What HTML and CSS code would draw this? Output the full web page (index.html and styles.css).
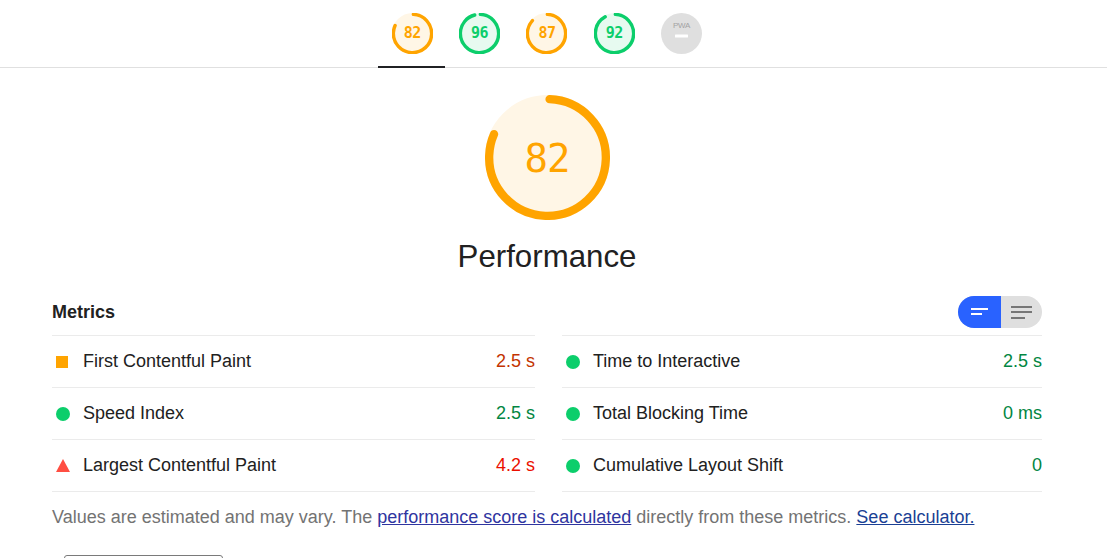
FILE: index.html
```html
<!DOCTYPE html>
<html lang="en">
<head>
<meta charset="utf-8">
<title>Lighthouse Report</title>
<link rel="stylesheet" href="styles.css">
</head>
<body>
<header class="sticky-header">
  <nav class="tabs">
    <a class="tab tab--active" href="#performance">
      <span class="mini-gauge">
        <svg viewBox="0 0 120 120" class="gauge-svg">
          <circle class="base base--avg" r="56" cx="60" cy="60"/>
          <circle class="arc arc--avg arc--sm" r="56" cx="60" cy="60" stroke-dasharray="283.5 351.86" transform="rotate(-87.44 60 60)"/>
        </svg>
        <span class="mini-num num--avg">82</span>
      </span>
    </a>
    <a class="tab" href="#accessibility">
      <span class="mini-gauge">
        <svg viewBox="0 0 120 120" class="gauge-svg">
          <circle class="base base--pass" r="56" cx="60" cy="60"/>
          <circle class="arc arc--pass arc--sm" r="56" cx="60" cy="60" stroke-dasharray="332.8 351.86" transform="rotate(-87.44 60 60)"/>
        </svg>
        <span class="mini-num num--pass">96</span>
      </span>
    </a>
    <a class="tab" href="#best-practices">
      <span class="mini-gauge">
        <svg viewBox="0 0 120 120" class="gauge-svg">
          <circle class="base base--avg" r="56" cx="60" cy="60"/>
          <circle class="arc arc--avg arc--sm" r="56" cx="60" cy="60" stroke-dasharray="301.1 351.86" transform="rotate(-87.44 60 60)"/>
        </svg>
        <span class="mini-num num--avg">87</span>
      </span>
    </a>
    <a class="tab" href="#seo">
      <span class="mini-gauge">
        <svg viewBox="0 0 120 120" class="gauge-svg">
          <circle class="base base--pass" r="56" cx="60" cy="60"/>
          <circle class="arc arc--pass arc--sm" r="56" cx="60" cy="60" stroke-dasharray="318.7 351.86" transform="rotate(-87.44 60 60)"/>
        </svg>
        <span class="mini-num num--pass">92</span>
      </span>
    </a>
    <a class="tab" href="#pwa">
      <span class="mini-gauge">
        <svg viewBox="0 0 41 41" class="gauge-svg">
          <circle r="20.5" cx="20.5" cy="20.5" fill="#dfdfdf"/>
          <text x="20.5" y="14.5" text-anchor="middle" class="pwa-text">PWA</text>
          <rect x="14" y="21.5" width="13" height="3" rx="0.5" fill="#ffffff"/>
        </svg>
      </span>
    </a>
  </nav>
</header>

<main class="main">
  <section class="score-header">
    <div class="big-gauge">
      <svg viewBox="0 0 120 120" class="gauge-svg">
        <circle class="base base--avg" r="56" cx="60" cy="60"/>
        <circle class="arc arc--avg" r="56" cx="60" cy="60" stroke-dasharray="284.5 351.86" transform="rotate(-87.95 60 60)"/>
      </svg>
      <span class="big-num num--avg">82</span>
    </div>
    <div class="category-title">Performance</div>
  </section>

  <section class="metrics">
    <div class="metrics-head">
      <span class="metrics-title">Metrics</span>
      <div class="toggle">
        <span class="toggle-half toggle-half--on">
          <svg width="18" height="8" viewBox="0 0 18 8"><rect x="0" y="0" width="17" height="2" fill="#fff"/><rect x="0" y="5" width="11" height="2" fill="#fff"/></svg>
        </span>
        <span class="toggle-half">
          <svg width="22" height="13" viewBox="0 0 22 13"><rect x="0" y="0" width="21" height="2" fill="#767676"/><rect x="0" y="5" width="21" height="2" fill="#767676"/><rect x="0" y="11" width="14" height="2" fill="#767676"/></svg>
        </span>
      </div>
    </div>

    <div class="metric-grid">
      <div class="metric-col metric-col--left">
        <div class="metric">
          <span class="icon"><span class="sq"></span></span>
          <span class="metric-title">First Contentful Paint</span>
          <span class="metric-value val--avg">2.5&nbsp;s</span>
        </div>
        <div class="metric">
          <span class="icon"><span class="dot"></span></span>
          <span class="metric-title">Speed Index</span>
          <span class="metric-value val--pass">2.5&nbsp;s</span>
        </div>
        <div class="metric">
          <span class="icon"><span class="tri"></span></span>
          <span class="metric-title">Largest Contentful Paint</span>
          <span class="metric-value val--fail">4.2&nbsp;s</span>
        </div>
      </div>
      <div class="metric-col metric-col--right">
        <div class="metric">
          <span class="icon"><span class="dot"></span></span>
          <span class="metric-title">Time to Interactive</span>
          <span class="metric-value val--pass">2.5&nbsp;s</span>
        </div>
        <div class="metric">
          <span class="icon"><span class="dot"></span></span>
          <span class="metric-title">Total Blocking Time</span>
          <span class="metric-value val--pass">0&nbsp;ms</span>
        </div>
        <div class="metric">
          <span class="icon"><span class="dot"></span></span>
          <span class="metric-title">Cumulative Layout Shift</span>
          <span class="metric-value val--pass">0</span>
        </div>
      </div>
    </div>

    <p class="disclaimer">Values are estimated and may vary. The <a class="link link--visited" href="#score">performance score is calculated</a> directly from these metrics. <a class="link" href="#calc">See calculator.</a></p>

    <button class="treemap-btn" type="button" aria-label="View Treemap"></button>
  </section>
</main>
</body>
</html>
```

FILE: styles.css
```css
* { box-sizing: border-box; }

html, body {
  margin: 0;
  padding: 0;
  background: #ffffff;
}

body {
  font-family: "Liberation Sans", Arial, sans-serif;
  font-size: 18px;
  color: #212121;
  overflow: hidden;
}

/* Sticky header with mini gauges */
.sticky-header {
  height: 68px;
  border-bottom: 1px solid #e0e0e0;
  display: flex;
  justify-content: center;
  padding-right: 13px;
}

.tabs {
  display: flex;
  height: 67px;
}

.tab {
  position: relative;
  width: 67.4px;
  height: 67px;
  display: flex;
  align-items: center;
  justify-content: center;
  text-decoration: none;
}

.tab--active::after {
  content: "";
  position: absolute;
  left: -1px;
  right: 1px;
  bottom: -1px;
  height: 2px;
  background: #202124;
}

.mini-gauge {
  position: relative;
  width: 41px;
  height: 41px;
  display: block;
  margin-top: -1px;
}

.gauge-svg {
  display: block;
  width: 100%;
  height: 100%;
}

.base { stroke-width: 8; }
.base--avg { fill: #fff6e6; stroke: #fff6e6; }
.base--pass { fill: #e7faf0; stroke: #e7faf0; }

.arc {
  fill: none;
  stroke-width: 8;
  stroke-linecap: round;
}
.arc--sm { stroke-width: 10; }
.arc--avg { stroke: #ffa400; }
.arc--pass { stroke: #0cce6b; }

.mini-num {
  position: absolute;
  inset: 0;
  display: flex;
  align-items: center;
  justify-content: center;
  font-family: "DejaVu Sans Mono", monospace;
  font-weight: bold;
  font-size: 15px;
  letter-spacing: -0.5px;
}

.num--avg { color: #ffa400; }
.num--pass { color: #0cce6b; }

.pwa-text {
  font-family: "Liberation Sans", Arial, sans-serif;
  font-size: 8px;
  fill: #a3a3a3;
  letter-spacing: -0.3px;
}

/* Main */
.main {
  width: 1042px;
  padding-left: 52px;
}

.score-header {
  display: flex;
  flex-direction: column;
  align-items: center;
  padding-top: 27px;
}

.big-gauge {
  position: relative;
  width: 125px;
  height: 125px;
}

.big-num {
  position: absolute;
  inset: 0;
  display: flex;
  align-items: center;
  justify-content: center;
  font-family: "DejaVu Sans Mono", monospace;
  font-size: 39px;
  letter-spacing: -1px;
  padding-top: 2px;
}

.category-title {
  margin-top: 19px;
  font-size: 31.25px;
  line-height: 36px;
  color: #212121;
}

/* Metrics */
.metrics {
  margin-top: 21px;
}

.metrics-head {
  display: flex;
  align-items: center;
  justify-content: space-between;
  height: 32px;
  margin-bottom: 7px;
}

.metrics-title {
  font-weight: bold;
  font-size: 18px;
  color: #212121;
}

.toggle {
  display: flex;
  width: 84px;
  height: 32px;
  border-radius: 16px;
  overflow: hidden;
  background: #dfdfdf;
}

.toggle-half {
  flex: 1;
  display: flex;
  align-items: center;
  justify-content: center;
}

.toggle-half--on {
  background: #2962ff;
  padding-left: 2px;
}

.toggle-half:not(.toggle-half--on) {
  padding-left: 1px;
}

.metric-grid {
  display: grid;
  grid-template-columns: 483px 480px;
  column-gap: 27px;
}

.metric-col {
  border-bottom: 1px solid #ebebeb;
}

.metric {
  display: flex;
  align-items: center;
  height: 52px;
  border-top: 1px solid #ebebeb;
  padding-left: 4px;
}

.icon {
  width: 14px;
  height: 14px;
  display: flex;
  align-items: center;
  justify-content: center;
  margin-right: 13px;
}

.sq {
  width: 12px;
  height: 12px;
  background: #ffa400;
  margin-left: -2px;
}

.dot {
  width: 14px;
  height: 14px;
  border-radius: 50%;
  background: #0cce6b;
}

.tri {
  width: 0;
  height: 0;
  border-left: 7px solid transparent;
  border-right: 7px solid transparent;
  border-bottom: 13px solid #ff4e42;
}

.metric-title {
  flex: 1;
  color: #212121;
}

.metric-value {
  text-align: right;
}

.val--avg { color: #c33300; }
.val--pass { color: #018642; }
.val--fail { color: #eb0f00; }

.disclaimer {
  margin: 13px 0 0;
  line-height: 24px;
  color: #737373;
}

.link {
  color: #1a3f94;
  text-decoration: underline;
}

.link--visited {
  color: #2f35a0;
}

.treemap-btn {
  display: block;
  margin: 26px 0 0 12px;
  width: 159px;
  height: 40px;
  padding: 0;
  border: 1px solid #7a7a7a;
  border-radius: 3px;
  background: #ffffff;
}
```
